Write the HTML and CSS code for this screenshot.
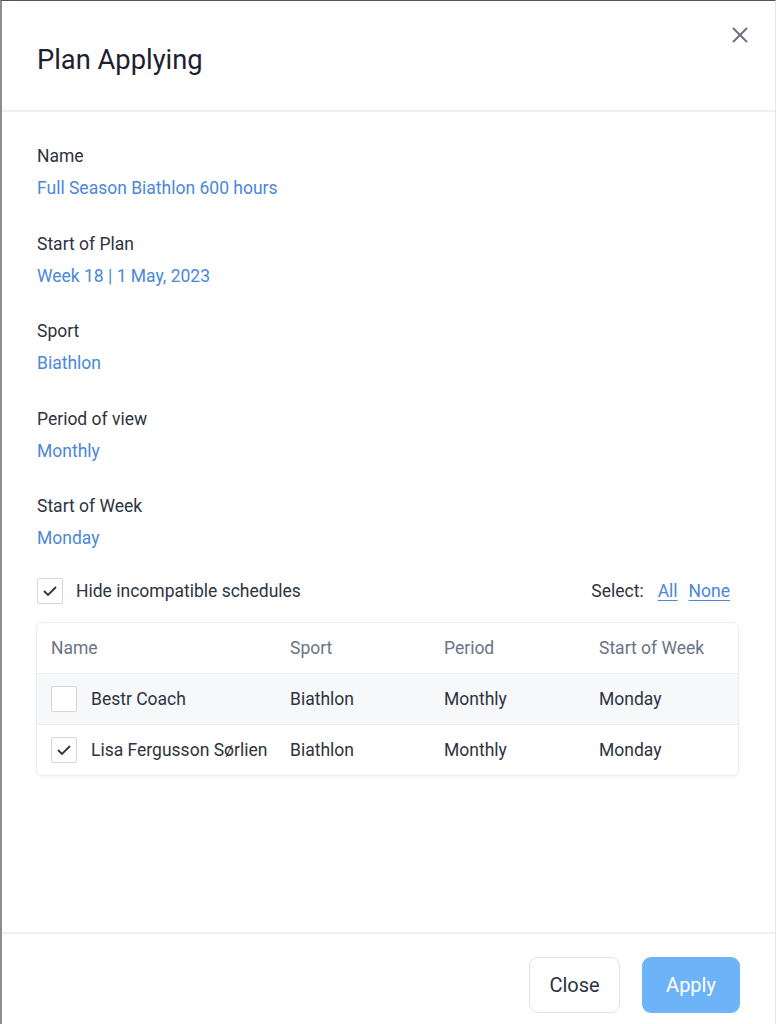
FILE: index.html
```html
<!DOCTYPE html>
<html>
<head>
<meta charset="utf-8">
<link rel="stylesheet" href="styles.css">
</head>
<body>
<div class="dialog">
  <header class="dlg-header">
    <h1 class="dlg-title">Plan Applying</h1>
    <button class="dlg-x" aria-label="Close">
      <svg width="16" height="16" viewBox="0 0 16 16"><path d="M1.5 1.5 L14.5 14.5 M14.5 1.5 L1.5 14.5" stroke="#6b7280" stroke-width="2" fill="none" stroke-linecap="round"/></svg>
    </button>
  </header>
  <main class="dlg-body">
    <div class="field"><div class="field-label">Name</div><div class="field-value">Full Season Biathlon 600 hours</div></div>
    <div class="field"><div class="field-label">Start of Plan</div><div class="field-value">Week 18 | 1 May, 2023</div></div>
    <div class="field"><div class="field-label">Sport</div><div class="field-value">Biathlon</div></div>
    <div class="field"><div class="field-label">Period of view</div><div class="field-value">Monthly</div></div>
    <div class="field"><div class="field-label">Start of Week</div><div class="field-value">Monday</div></div>

    <div class="filter-row">
      <label class="check-label">
        <span class="checkbox checked"><svg width="14" height="10" viewBox="0 0 14 10"><path d="M1 5 L5 9 L13 1" stroke="#2d3340" stroke-width="1.8" fill="none"/></svg></span>
        <span>Hide incompatible schedules</span>
      </label>
      <div class="select-links">
        <span class="select-text">Select:</span>
        <a class="link">All</a>
        <a class="link">None</a>
      </div>
    </div>

    <div class="table">
      <div class="trow thead">
        <div class="cell">Name</div>
        <div class="cell">Sport</div>
        <div class="cell">Period</div>
        <div class="cell">Start of Week</div>
      </div>
      <div class="trow alt">
        <div class="cell name-cell"><span class="checkbox"></span><span>Bestr Coach</span></div>
        <div class="cell">Biathlon</div>
        <div class="cell">Monthly</div>
        <div class="cell">Monday</div>
      </div>
      <div class="trow">
        <div class="cell name-cell"><span class="checkbox checked"><svg width="14" height="10" viewBox="0 0 14 10"><path d="M1 5 L5 9 L13 1" stroke="#2d3340" stroke-width="1.8" fill="none"/></svg></span><span>Lisa Fergusson Sørlien</span></div>
        <div class="cell">Biathlon</div>
        <div class="cell">Monthly</div>
        <div class="cell">Monday</div>
      </div>
    </div>
  </main>
  <footer class="dlg-footer">
    <button class="btn btn-close">Close</button>
    <button class="btn btn-apply">Apply</button>
  </footer>
</div>
</body>
</html>
```

FILE: styles.css
```css
* { box-sizing: border-box; }
html, body { margin: 0; padding: 0; background: #fff; }
body { font-family: Roboto, "Liberation Sans", sans-serif; color: #2d3340; }

.dialog {
  width: 776px;
  height: 1024px;
  display: flex;
  flex-direction: column;
  border-left: 2px solid #8a8d91;
  border-top: 1px solid #4b5563;
  border-right: 1px solid #e6e6e6;
  position: relative;
}

.dlg-header {
  height: 111px;
  flex: none;
  border-bottom: 2px solid #f0f0f0;
  display: flex;
  align-items: center;
  padding: 0 35px;
}
.dlg-title {
  margin: 0;
  font-size: 27.3px;
  font-weight: 400;
  color: #1c2130;
  line-height: 32px;
  position: relative;
  top: 4px;
}
.dlg-x {
  position: absolute;
  top: 26px;
  right: 27px;
  width: 16px;
  height: 16px;
  padding: 0;
  border: 0;
  background: none;
  display: flex;
}

.dlg-body {
  flex: 1;
  padding: 32px 36px 0 35px;
  display: flex;
  flex-direction: column;
}
.field { margin-bottom: 31.5px; }
.field-label, .field-value { font-size: 17.5px; line-height: 24px; }
.field-label { color: #2d3340; }
.field-value { color: #4a88d8; margin-top: 8px; }
.field:nth-of-type(5) { margin-bottom: 28px; }

.filter-row {
  display: flex;
  align-items: center;
  justify-content: space-between;
  height: 26px;
  padding-right: 9px;
  font-size: 17.5px;
}
.check-label { display: flex; align-items: center; gap: 13px; }
.checkbox {
  width: 26px;
  height: 26px;
  border: 1.5px solid #d6d6d6;
  border-radius: 2px;
  background: #fff;
  display: inline-flex;
  align-items: center;
  justify-content: center;
  flex: none;
}
.select-links { display: flex; align-items: center; gap: 11px; }
.select-text { margin-right: 3px; }
.link { color: #4a88d8; text-decoration: underline; text-underline-offset: 3px; }

.table {
  margin-top: 18px;
  margin-left: -1px;
  border: 1px solid #eceef1;
  border-radius: 6px;
  box-shadow: 0 1px 3px rgba(0,0,0,0.06);
  overflow: hidden;
}
.trow {
  display: grid;
  grid-template-columns: 253px 154px 155px 1fr;
  height: 51px;
  align-items: center;
  border-top: 1px solid #eceef1;
  font-size: 17.5px;
}
.trow.thead { border-top: 0; height: 50px; color: #6b7386; }
.trow.alt { background: #f7f8fa; }
.cell { padding-left: 14px; white-space: nowrap; }
.trow .cell:not(:first-child) { padding-left: 0; }
.name-cell { display: flex; align-items: center; gap: 14px; }

.dlg-footer {
  height: 92px;
  flex: none;
  border-top: 2px solid #f0f0f0;
  display: flex;
  justify-content: flex-end;
  align-items: flex-start;
  gap: 22px;
  padding: 23px 35px 0 0;
}
.btn {
  height: 56px;
  border-radius: 9px;
  font-family: Roboto, "Liberation Sans", sans-serif;
  font-size: 20px;
  padding: 0;
  cursor: pointer;
}
.btn-close {
  width: 91px;
  background: #fff;
  border: 1.5px solid #e3e3e3;
  color: #2d3340;
}
.btn-apply {
  width: 98px;
  background: #6db3f8;
  border: 0;
  color: #fff;
}
```
